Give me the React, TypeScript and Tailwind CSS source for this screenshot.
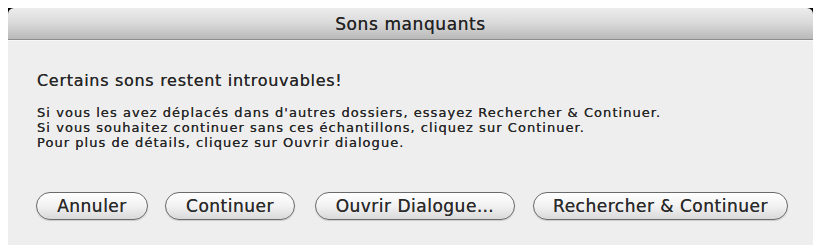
import React from "react";

const font = { fontFamily: '"DejaVu Sans", "Lucida Grande", sans-serif' };

function Btn({ label, w }: { label: string; w: string }) {
  return (
    <button
      className={`${w} h-[28px] rounded-full border-[1.5px] border-[#6a6a6a] bg-gradient-to-b from-[#ffffff] via-[#f2f2f2] to-[#d9d9d9] text-[17px] leading-[20px] text-[#2a2a2a] flex items-center justify-center shadow-[0_1px_1px_rgba(0,0,0,0.15)] tracking-[0.5px] [text-shadow:0_0_0.5px_#444]`}
      style={font}
    >
      {label}
    </button>
  );
}

export default function App() {
  return (
    <div className="w-[818px] h-[245px] bg-white relative overflow-hidden" style={font}>
      <div className="absolute left-[8px] top-[8px] w-[6px] h-[6px] bg-black" />
      <div className="absolute left-[807px] top-[8px] w-[6px] h-[6px] bg-black" />
      <div className="pt-[8px] pl-[8px]">
        <div className="relative w-[805px] h-[237px] flex flex-col">
          <div className="h-[32px] rounded-t-[6px] bg-gradient-to-b from-[#ededed] via-[#d9d9d9] to-[#b9b9b9] border-b border-[#8e8e8e] flex items-center justify-center">
            <span className="text-[17px] leading-[20px] text-[#222] tracking-[0.6px] [text-shadow:0_0_0.5px_#444]">Sons manquants</span>
          </div>
          <div className="flex-1 bg-[#eeeeee] border-t border-[#f7f7f7] pl-[29px]">
            <div className="pt-[30px] text-[16px] leading-[19px] text-[#252525] tracking-[0.7px] [text-shadow:0_0_0.4px_#444]">Certains sons restent introuvables!</div>
            <div className="mt-[15px] text-[13px] leading-[15.2px] text-[#252525] tracking-[1.05px] [text-shadow:0_0_0.4px_#444]">
              <div>Si vous les avez déplacés dans d'autres dossiers, essayez Rechercher &amp; Continuer.</div>
              <div>Si vous souhaitez continuer sans ces échantillons, cliquez sur Continuer.</div>
              <div>Pour plus de détails, cliquez sur Ouvrir dialogue.</div>
            </div>
            <div className="mt-[41px] flex items-center">
              <Btn label="Annuler" w="w-[112px] ml-[-1px]" />
              <div className="w-[17px]" />
              <Btn label="Continuer" w="w-[130px]" />
              <div className="w-[20px]" />
              <Btn label="Ouvrir Dialogue…" w="w-[200px]" />
              <div className="w-[18px]" />
              <Btn label="Rechercher & Continuer" w="w-[255px]" />
            </div>
          </div>
        </div>
      </div>
    </div>
  );
}
